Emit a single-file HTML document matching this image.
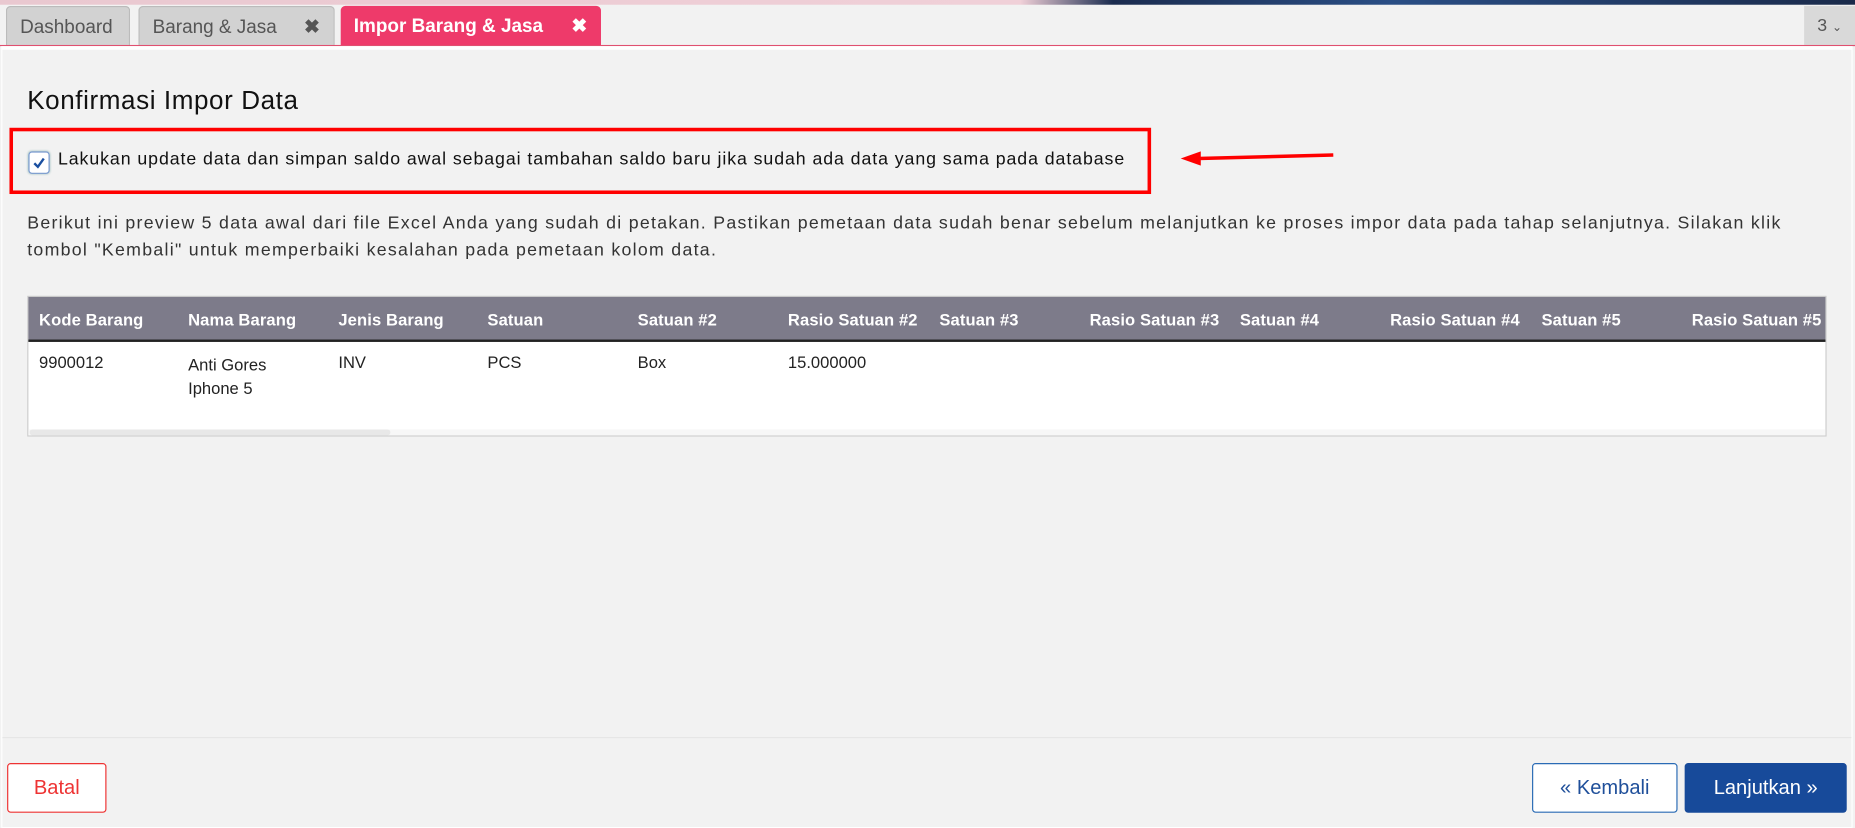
<!DOCTYPE html>
<html><head><meta charset="utf-8"><style>
html,body{margin:0;padding:0;width:1855px;height:828px;overflow:hidden;background:#f2f2f2}
#s{position:absolute;left:0;top:0;width:1568px;height:700px;transform:scale(1.18304);transform-origin:0 0;font-family:"Segoe UI","Liberation Sans",sans-serif;color:#222}
.a{position:absolute;white-space:nowrap}
.tab{position:absolute;top:5px;height:33px;border-radius:4px 4px 0 0;font-size:16px;line-height:35px;box-sizing:border-box;padding-left:11px}
.th{position:absolute;top:262px;color:#fff;font-weight:bold;font-size:14px;white-space:nowrap;letter-spacing:0.1px}
.td{position:absolute;font-size:14px;color:#222;white-space:nowrap}
</style></head><body><div id="s">
<div class="a" style="left:0;top:0;width:1568px;height:4px;background:linear-gradient(90deg,#e9c8d0 0%,#f0d0d8 55%,#1b2c4f 60%,#2a4e85 75%,#1a2a4a 100%)"></div>
<div class="tab" style="left:5px;width:105px;background:#d2d2d2;border:1px solid #bbb;border-bottom:none;color:#555">Dashboard</div>
<div class="tab" style="left:117px;width:166px;background:#d2d2d2;border:1px solid #bbb;border-bottom:none;color:#555">Barang &amp; Jasa<span style="position:absolute;left:139px;font-weight:bold;color:#555">✖</span></div>
<div class="tab" style="left:288px;width:220px;background:#ee3a6a;color:#fff;font-weight:bold">Impor Barang &amp; Jasa<span style="position:absolute;left:195px">✖</span></div>
<div class="a" style="left:1525px;top:5px;width:43px;height:33px;background:#d9d9d9;font-size:15px;line-height:33px;color:#555;text-align:center">3 <span style="font-size:10px">⌄</span></div>
<div class="a" style="left:0;top:38px;width:1568px;height:1px;background:#e05070"></div>
<div class="a" style="left:1px;top:39px;width:1565px;height:661px;border:1px solid #fff;border-top:3px solid #fff;box-sizing:border-box"></div>
<div class="a" style="left:23px;top:72px;font-size:22px;color:#111;letter-spacing:0.5px">Konfirmasi Impor Data</div>
<div class="a" style="left:8px;top:108px;width:965px;height:56px;border:3px solid #f00;box-sizing:border-box"></div>
<div class="a" style="left:24px;top:128px;width:18px;height:19px;border:1px solid #7a9ad0;border-radius:3px;background:#fff;box-sizing:border-box;box-shadow:0 0 2px #9bb"><svg width="16" height="17" viewBox="0 0 16 17"><path d="M4 9 L7 12 L12 5" stroke="#1a4fa0" stroke-width="2" fill="none"/></svg></div>
<div class="a" style="left:49px;top:126px;font-size:15px;color:#111;letter-spacing:0.78px">Lakukan update data dan simpan saldo awal sebagai tambahan saldo baru jika sudah ada data yang sama pada database</div>
<svg class="a" style="left:995px;top:124px" width="135" height="16"><path d="M132 7 L18 10" stroke="#f00" stroke-width="3"/><path d="M3 10 L20 4 L20 16 Z" fill="#f00"/></svg>
<div class="a" style="left:23px;top:177px;font-size:15px;color:#333;line-height:23px;letter-spacing:1.08px">Berikut ini preview 5 data awal dari file Excel Anda yang sudah di petakan. Pastikan pemetaan data sudah benar sebelum melanjutkan ke proses impor data pada tahap selanjutnya. Silakan klik<br>tombol "Kembali" untuk memperbaiki kesalahan pada pemetaan kolom data.</div>
<div class="a" style="left:23px;top:250px;width:1521px;height:119px;background:#fff;border:1px solid #ccc;box-sizing:border-box"></div>
<div class="a" style="left:24px;top:251px;width:1519px;height:36px;background:#7d7b8a;border-bottom:2px solid #222"></div>
<div class="th" style="left:33px">Kode Barang</div>
<div class="th" style="left:159px">Nama Barang</div>
<div class="th" style="left:286px">Jenis Barang</div>
<div class="th" style="left:412px">Satuan</div>
<div class="th" style="left:539px">Satuan #2</div>
<div class="th" style="left:666px">Rasio Satuan #2</div>
<div class="th" style="left:794px">Satuan #3</div>
<div class="th" style="left:921px">Rasio Satuan #3</div>
<div class="th" style="left:1048px">Satuan #4</div>
<div class="th" style="left:1175px">Rasio Satuan #4</div>
<div class="th" style="left:1303px">Satuan #5</div>
<div class="th" style="left:1430px">Rasio Satuan #5</div>
<div class="td" style="left:33px;top:298px">9900012</div>
<div class="td" style="left:159px;top:298px;line-height:20px">Anti Gores<br>Iphone 5</div>
<div class="td" style="left:286px;top:298px">INV</div>
<div class="td" style="left:412px;top:298px">PCS</div>
<div class="td" style="left:539px;top:298px">Box</div>
<div class="td" style="left:666px;top:298px">15.000000</div>
<div class="a" style="left:24px;top:363px;width:1519px;height:5px;background:#f7f7f7"></div>
<div class="a" style="left:25px;top:363px;width:305px;height:5px;background:#e8e8e8;border-radius:3px"></div>
<div class="a" style="left:2px;top:623px;width:1563px;height:1px;background:#e6e6e6"></div>
<div class="a" style="left:6px;top:645px;width:84px;height:42px;background:#fff;border:1px solid #e33;border-radius:3px;box-sizing:border-box;color:#e33;font-size:17px;text-align:center;line-height:40px">Batal</div>
<div class="a" style="left:1295px;top:645px;width:123px;height:42px;background:#fff;border:1px solid #2a6bb5;border-radius:3px;box-sizing:border-box;color:#1f4f9a;font-size:17px;text-align:center;line-height:40px">« Kembali</div>
<div class="a" style="left:1424px;top:645px;width:137px;height:42px;background:#174a9a;border-radius:3px;color:#fff;font-size:17px;text-align:center;line-height:42px">Lanjutkan »</div>
</div></body></html>
